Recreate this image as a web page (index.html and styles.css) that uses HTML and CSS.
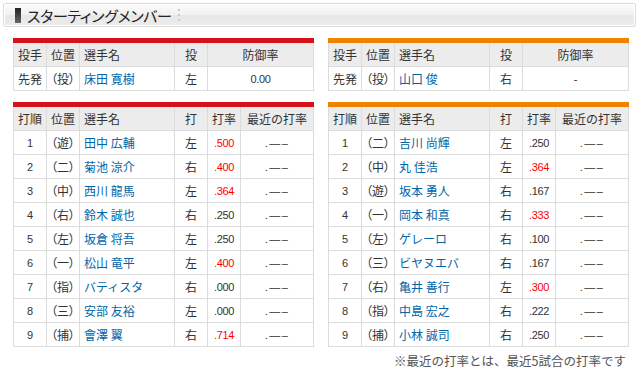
FILE: index.html
```html
<!DOCTYPE html>
<html lang="ja">
<head>
<meta charset="utf-8">
<link rel="stylesheet" href="styles.css">
</head>
<body>
<div class="page">
  <div class="title-bar">
    <span class="title-mark"></span>
    <h2 class="title">スターティングメンバー</h2>
    <span class="title-sep"></span>
  </div>

  <div class="pair">
    <table class="tbl red pitch">
      <colgroup><col class="c1"><col class="c2"><col class="c3"><col class="c4"><col class="c5p"></colgroup>
      <tr><th>投手</th><th>位置</th><th class="l">選手名</th><th>投</th><th>防御率</th></tr>
      <tr><td>先発</td><td class="pos">（投）</td><td class="name">床田 寛樹</td><td>左</td><td class="num">0.00</td></tr>
    </table>
    <table class="tbl orange pitch">
      <colgroup><col class="c1"><col class="c2"><col class="c3"><col class="c4"><col class="c5p"></colgroup>
      <tr><th>投手</th><th>位置</th><th class="l">選手名</th><th>投</th><th>防御率</th></tr>
      <tr><td>先発</td><td class="pos">（投）</td><td class="name">山口 俊</td><td>右</td><td class="num">-</td></tr>
    </table>
  </div>

  <div class="pair">
    <table class="tbl red">
      <colgroup><col class="c1"><col class="c2"><col class="c3"><col class="c4"><col class="c5"><col class="c6"></colgroup>
      <tr><th>打順</th><th>位置</th><th class="l">選手名</th><th>打</th><th>打率</th><th>最近の打率</th></tr>
      <tr><td class="num">1</td><td class="pos">（遊）</td><td class="name">田中 広輔</td><td>左</td><td class="num hot">.500</td><td class="num recent">.—–</td></tr>
      <tr><td class="num">2</td><td class="pos">（二）</td><td class="name">菊池 涼介</td><td>右</td><td class="num hot">.400</td><td class="num recent">.—–</td></tr>
      <tr><td class="num">3</td><td class="pos">（中）</td><td class="name">西川 龍馬</td><td>左</td><td class="num hot">.364</td><td class="num recent">.—–</td></tr>
      <tr><td class="num">4</td><td class="pos">（右）</td><td class="name">鈴木 誠也</td><td>右</td><td class="num">.250</td><td class="num recent">.—–</td></tr>
      <tr><td class="num">5</td><td class="pos">（左）</td><td class="name">坂倉 将吾</td><td>左</td><td class="num">.250</td><td class="num recent">.—–</td></tr>
      <tr><td class="num">6</td><td class="pos">（一）</td><td class="name">松山 竜平</td><td>左</td><td class="num hot">.400</td><td class="num recent">.—–</td></tr>
      <tr><td class="num">7</td><td class="pos">（指）</td><td class="name">バティスタ</td><td>右</td><td class="num">.000</td><td class="num recent">.—–</td></tr>
      <tr><td class="num">8</td><td class="pos">（三）</td><td class="name">安部 友裕</td><td>左</td><td class="num">.000</td><td class="num recent">.—–</td></tr>
      <tr><td class="num">9</td><td class="pos">（捕）</td><td class="name">會澤 翼</td><td>右</td><td class="num hot">.714</td><td class="num recent">.—–</td></tr>
    </table>
    <table class="tbl orange">
      <colgroup><col class="c1"><col class="c2"><col class="c3"><col class="c4"><col class="c5"><col class="c6"></colgroup>
      <tr><th>打順</th><th>位置</th><th class="l">選手名</th><th>打</th><th>打率</th><th>最近の打率</th></tr>
      <tr><td class="num">1</td><td class="pos">（二）</td><td class="name">吉川 尚輝</td><td>左</td><td class="num">.250</td><td class="num recent">.—–</td></tr>
      <tr><td class="num">2</td><td class="pos">（中）</td><td class="name">丸 佳浩</td><td>左</td><td class="num hot">.364</td><td class="num recent">.—–</td></tr>
      <tr><td class="num">3</td><td class="pos">（遊）</td><td class="name">坂本 勇人</td><td>右</td><td class="num">.167</td><td class="num recent">.—–</td></tr>
      <tr><td class="num">4</td><td class="pos">（一）</td><td class="name">岡本 和真</td><td>右</td><td class="num hot">.333</td><td class="num recent">.—–</td></tr>
      <tr><td class="num">5</td><td class="pos">（左）</td><td class="name">ゲレーロ</td><td>右</td><td class="num">.100</td><td class="num recent">.—–</td></tr>
      <tr><td class="num">6</td><td class="pos">（三）</td><td class="name">ビヤヌエバ</td><td>右</td><td class="num">.167</td><td class="num recent">.—–</td></tr>
      <tr><td class="num">7</td><td class="pos">（右）</td><td class="name">亀井 善行</td><td>左</td><td class="num hot">.300</td><td class="num recent">.—–</td></tr>
      <tr><td class="num">8</td><td class="pos">（指）</td><td class="name">中島 宏之</td><td>右</td><td class="num">.222</td><td class="num recent">.—–</td></tr>
      <tr><td class="num">9</td><td class="pos">（捕）</td><td class="name">小林 誠司</td><td>右</td><td class="num">.250</td><td class="num recent">.—–</td></tr>
    </table>
  </div>

  <p class="note">※最近の打率とは、最近5試合の打率です</p>
</div>
</body>
</html>
```

FILE: styles.css
```css
html, body {
  margin: 0;
  padding: 0;
  background: #fff;
}
body {
  font-family: "Noto Sans CJK JP", "Noto Sans", sans-serif;
  font-size: 12px;
  color: #333;
}
.page {
  width: 640px;
  padding-top: 3px;
}
.title-bar {
  margin: 0 4px 0 3px;
  height: 22px;
  border: 1px solid #dcdcdc;
  border-radius: 2px;
  background: linear-gradient(#fbfbfb, #f1f1f1 50%, #e7e7e7 51%, #ececec);
  box-shadow: inset 0 0 0 1px #fff;
  display: flex;
  align-items: center;
}
.title-mark {
  width: 6px;
  height: 15px;
  margin-left: 11px;
  background: linear-gradient(#222, #666);
}
.title {
  margin: 0 0 0 6px;
  font-size: 15px;
  font-weight: normal;
  color: #222;
  font-feature-settings: "palt";
  letter-spacing: -0.3px;
}
.title-sep {
  width: 2px;
  height: 13px;
  margin-left: 6px;
  background: repeating-linear-gradient(#c8c8c8 0 2px, transparent 2px 5px);
}
.pair {
  display: flex;
  gap: 14px;
  padding-left: 13px;
  margin-top: 11px;
}
.tbl {
  width: 300px;
  table-layout: fixed;
  border-collapse: collapse;
  border: 1px solid #dcdcdc;
}
.tbl.red { border-top: 5px solid #d7101a; }
.tbl.orange { border-top: 5px solid #f08200; }
.tbl th, .tbl td {
  border: 1px solid #dcdcdc;
  height: 23px;
  padding: 0 4px;
  box-sizing: content-box;
  text-align: center;
  white-space: nowrap;
  overflow: hidden;
  font-weight: normal;
  line-height: 16px;
}
.tbl th {
  background: #ececec;
  color: #333;
  font-size: 12px;
}
.tbl th.l, .tbl td.name { text-align: left; }
.tbl td.name { color: #0066aa; }
.tbl td.pos {
  font-feature-settings: "palt";
  padding: 0 2px;
}
.tbl th:nth-child(6) { padding: 0 2px; }
.tbl td.num {
  font-family: "Liberation Sans", sans-serif;
  font-size: 11px;
  letter-spacing: -0.3px;
}
.tbl td.recent { letter-spacing: 1.5px; }
.tbl td.hot { color: #ff0000; }
.c1 { width: 33px; }
.c2 { width: 33px; }
.c3 { width: 95px; }
.c4 { width: 33px; }
.c5 { width: 33px; }
.c5p { width: 106px; }
.c6 { width: 73px; }
.note {
  margin: 6px 14px 0 0;
  text-align: right;
  font-size: 12.5px;
  line-height: 16px;
  color: #555;
}
```
